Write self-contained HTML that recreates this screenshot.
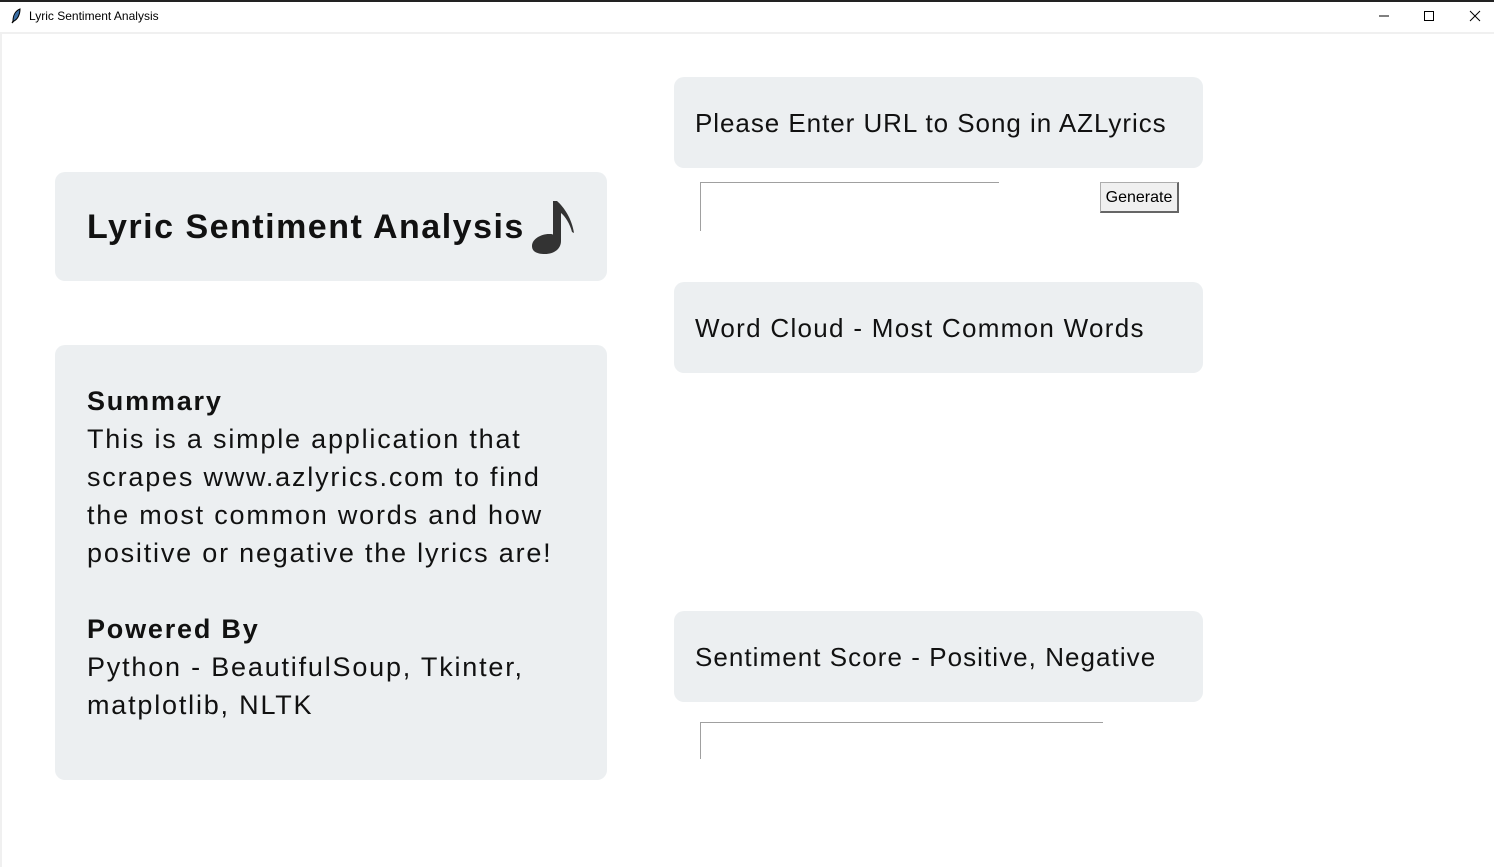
<!DOCTYPE html>
<html><head><style>
body{margin:0;width:1494px;height:867px;background:#fff;position:relative;overflow:hidden;font-family:"Liberation Sans",sans-serif;}
.topline{position:absolute;left:0;top:0;width:1494px;height:2px;background:#222;}
.title{position:absolute;left:29px;top:9px;font-size:12px;color:#000;}
.sep{position:absolute;left:0;top:32px;width:1494px;height:2px;background:#f0f0f0;}
.lb{position:absolute;left:0;top:32px;width:2px;height:835px;background:#f0f0f0;}
.card{position:absolute;background:#eceff1;border-radius:10px;}
.h{position:absolute;font-size:26px;color:#111;white-space:nowrap;letter-spacing:0.95px;}
.entry{position:absolute;border-top:1px solid #a0a0a0;border-left:1px solid #a0a0a0;}
.btn{position:absolute;left:1100px;top:182px;width:79px;height:31px;background:#f0f0f0;border:1px solid #adadad;border-right:2px solid #666;border-bottom:2px solid #666;box-sizing:border-box;font-size:16px;text-align:center;line-height:30px;}
</style></head><body>
<div class="topline"></div>
<svg style="position:absolute;left:10px;top:8px" width="12" height="16" viewBox="0 0 12 16"><path d="M10 1 C5 3 3 8 3 13 L2 15 L4 13 C8 11 10 6 10 1Z" fill="#3a6ea5" stroke="#000" stroke-width="1"/></svg>
<div class="title">Lyric Sentiment Analysis</div>
<svg style="position:absolute;left:1378px;top:10px" width="12" height="12"><line x1="1" y1="6" x2="11" y2="6" stroke="#000"/></svg>
<svg style="position:absolute;left:1423px;top:10px" width="12" height="12"><rect x="1.5" y="1.5" width="9" height="9" fill="none" stroke="#000"/></svg>
<svg style="position:absolute;left:1469px;top:10px" width="12" height="12"><path d="M1 1L11 11M11 1L1 11" stroke="#000"/></svg>
<div class="sep"></div><div class="lb"></div>

<div class="card" style="left:55px;top:172px;width:552px;height:109px"></div>
<div class="h" style="left:87px;top:208px;font-size:34px;font-weight:bold;letter-spacing:1.5px;">Lyric Sentiment Analysis</div>
<svg style="position:absolute;left:530px;top:199px" width="46" height="56" viewBox="0 0 46 56"><path d="M23 2 L27 2 C34 8 42 20 44 34 L42 33 C40 25 35 17 31 14 L31 42 C31 50 24 55 15 55 C6 55 2 52 2 47 C2 40 11 35 19 35 C21 35 23 35 23 36 Z" fill="#333"/></svg>

<div class="card" style="left:55px;top:345px;width:552px;height:435px"></div>
<div style="position:absolute;left:87px;top:382px;font-size:27px;line-height:38px;color:#111;letter-spacing:1.8px;white-space:nowrap;">
<b>Summary</b><br>This is a simple application that<br>scrapes www.azlyrics.com to find<br>the most common words and how<br>positive or negative the lyrics are!<br><br><b>Powered By</b><br>Python - BeautifulSoup, Tkinter,<br>matplotlib, NLTK</div>

<div class="card" style="left:674px;top:77px;width:529px;height:91px"></div>
<div class="h" style="left:695px;top:108px;">Please Enter URL to Song in AZLyrics</div>
<div class="entry" style="left:700px;top:182px;width:298px;height:48px"></div>
<div class="btn">Generate</div>

<div class="card" style="left:674px;top:282px;width:529px;height:91px"></div>
<div class="h" style="left:695px;top:313px;letter-spacing:1.3px;">Word Cloud - Most Common Words</div>

<div class="card" style="left:674px;top:611px;width:529px;height:91px"></div>
<div class="h" style="left:695px;top:642px;letter-spacing:1.05px;">Sentiment Score - Positive, Negative</div>
<div class="entry" style="left:700px;top:722px;width:402px;height:36px"></div>
</body></html>
